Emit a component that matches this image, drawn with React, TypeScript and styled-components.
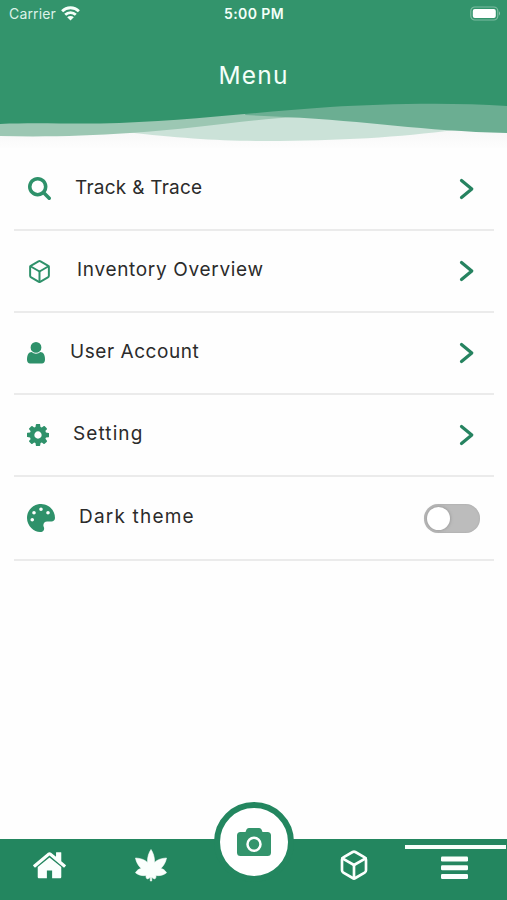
import React, { useState } from "react";
import styled, { createGlobalStyle } from "styled-components";
import { FaPalette } from "react-icons/fa";
import { FiBox } from "react-icons/fi";

const GlobalStyle = createGlobalStyle`
  *, *::before, *::after { box-sizing: border-box; }
  body { margin: 0; background: #fff; font-family: Inter, "Liberation Sans", sans-serif; }
  button { padding: 0; border: 0; background: none; color: inherit; font: inherit; }
`;

const Screen = styled.div`
  display: flex;
  flex-direction: column;
  width: 507px;
  height: 900px;
  overflow: hidden;
  background: #fefefe;
`;

const Header = styled.header`
  display: grid;
  grid-template-rows: 28px 74px 46px;
  height: 148px;
  flex: none;
  color: #f4fff9;
  background: linear-gradient(#33946c 103px, #fefefe 103px);
`;

const StatusBar = styled.div`
  display: grid;
  grid-template-columns: 1fr auto 1fr;
  align-items: center;
  padding: 0 6px 0 9px;
  font-size: 14px;
  line-height: 28px;
`;

const Carrier = styled.div`
  display: flex;
  align-items: center;
  gap: 5px;
  color: #dcf2e8;
  letter-spacing: 0.15px;

  svg {
    margin-top: -2px;
  }
`;

const Clock = styled.time`
  margin-left: -2px;
  font-weight: 600;
  font-size: 14px;
  letter-spacing: 0.4px;
`;

const BatteryIcon = styled.svg`
  justify-self: end;
  margin-top: -2px;
`;

const Title = styled.h1`
  margin: 0;
  padding-top: 32px;
  text-align: center;
  font-size: 24.5px;
  line-height: 30px;
  font-weight: 400;
  letter-spacing: 1.2px;
`;

const Wave = styled.svg`
  display: block;
  width: 507px;
  height: 46px;
`;

const List = styled.main`
  flex: 1;
  padding: 0 13px 0 14px;
`;

const Row = styled.div<{ $height: number }>`
  display: flex;
  align-items: center;
  height: ${(p) => p.$height}px;
  padding: 0 14px 0 13px;
  border-bottom: 2px solid #ebebeb;
`;

const RowIcon = styled.span<{ $width: number; $shift?: number }>`
  display: flex;
  width: ${(p) => p.$width}px;
  padding-left: ${(p) => p.$shift ?? 0}px;
  flex: none;
  color: #2e916a;
`;

const Label = styled.span<{ $tracking: number }>`
  flex: 1;
  padding-bottom: 2px;
  font-size: 19px;
  line-height: 24px;
  letter-spacing: ${(p) => p.$tracking}px;
  color: #2b2b2b;
  white-space: nowrap;
`;

const Chevron = styled.svg`
  margin-right: 5px;
  color: #268360;
`;

const Toggle = styled.button<{ $on: boolean }>`
  display: flex;
  justify-content: ${(p) => (p.$on ? "flex-end" : "flex-start")};
  align-items: center;
  width: 56px;
  height: 29px;
  padding: 0 3px;
  border-radius: 15px;
  background: ${(p) => (p.$on ? "#2e916a" : "#bcbcbc")};
  box-shadow: inset 0 0 2px #a5a5a5;
`;

const Knob = styled.span`
  width: 23px;
  height: 23px;
  border-radius: 50%;
  background: #fff;
  box-shadow: 0 0 3px 1px #a0a0a0;
`;

const TabBar = styled.nav`
  display: grid;
  grid-template-columns: repeat(5, 1fr);
  height: 61px;
  flex: none;
  color: #fbfffd;
  background: #23865f;
`;

const Tab = styled.button<{ $active?: boolean }>`
  display: flex;
  justify-content: center;
  align-items: flex-start;
  padding-top: ${(p) => (p.$active ? 7 : 10)}px;
  padding-right: 2px;
  border-top: ${(p) => (p.$active ? "4px solid #f8fffb" : "0")};
  margin: ${(p) => (p.$active ? "6px 1px 0 -1px" : "0")};
`;

const CameraTab = styled.button`
  display: flex;
  justify-content: center;
  align-items: center;
  justify-self: center;
  width: 80px;
  height: 80px;
  margin: -37px -1px 0 0;
  border: 6px solid #23865f;
  border-radius: 50%;
  background: #fff;
  color: #33946c;
`;

const SearchIcon = () => (
  <svg width="23" height="23" viewBox="64 128 1664 1664" fill="currentColor">
    <path d="M1216 832q0-185-131.5-316.5t-316.5-131.5-316.5 131.5-131.5 316.5 131.5 316.5 316.5 131.5 316.5-131.5 131.5-316.5zm512 832q0 52-38 90t-90 38q-54 0-90-38l-343-342q-179 124-399 124-143 0-273.5-55.5t-225-150-150-225-55.5-273.5 55.5-273.5 150-225 225-150 273.5-55.5 273.5 55.5 225 150 150 225 55.5 273.5q0 220-124 399l343 343q37 37 37 90z" />
  </svg>
);

const UserIcon = () => (
  <svg width="18" height="21.6" viewBox="256 128 1280 1536" fill="currentColor">
    <path d="M1536 1399q0 109-62.5 187t-150.5 78h-854q-88 0-150.5-78t-62.5-187q0-85 8.5-160.5t31.5-152 58.5-131 94-89 134.5-34.5q131 128 313 128t313-128q76 0 134.5 34.5t94 89 58.5 131 31.5 152 8.5 160.5zm-256-887q0 159-112.5 271.5t-271.5 112.5-271.5-112.5-112.5-271.5 112.5-271.5 271.5-112.5 271.5 112.5 112.5 271.5z" />
  </svg>
);

const CogIcon = () => (
  <svg width="22" height="22" viewBox="128 128 1536 1536" fill="currentColor">
    <path d="M1152 896q0-106-75-181t-181-75-181 75-75 181 75 181 181 75 181-75 75-181zm512-109v222q0 12-8 23t-20 13l-185 28q-19 54-39 91 35 50 107 138 10 12 10 25t-9 23q-27 37-99 108t-94 71q-12 0-26-9l-138-108q-44 23-91 38-16 136-29 186-7 28-36 28h-222q-14 0-24.5-8.5t-11.5-21.5l-28-184q-49-16-90-37l-141 107q-10 9-25 9-14 0-25-11-126-114-165-168-7-10-7-23 0-12 8-23 15-21 51-66.5t54-70.5q-27-50-41-99l-183-27q-13-2-21-12.5t-8-23.5v-222q0-12 8-23t19-13l186-28q14-46 39-92-40-57-107-138-10-12-10-24 0-10 9-23 26-36 98.5-107.5t94.5-71.5q13 0 26 10l138 107q44-23 91-38 16-136 29-186 7-28 36-28h222q14 0 24.5 8.5t11.5 21.5l28 184q49 16 90 37l142-107q9-9 24-9 13 0 25 10 129 119 165 170 7 8 7 22 0 12-8 23-15 21-51 66.5t-54 70.5q26 50 41 98l183 28q13 2 21 12.5t8 23.5z" />
  </svg>
);

const HomeIcon = () => (
  <svg width="33" height="33" viewBox="89 100 1614 1614" fill="currentColor">
    <path d="M1472 992v480q0 26-19 45t-45 19h-384v-384h-256v384h-384q-26 0-45-19t-19-45v-480q0-1 .5-3t.5-3l575-474 575 474q1 2 1 6zm223-69l-62 74q-8 9-21 11h-3q-13 0-21-7l-692-577-692 577q-12 8-24 7-13-2-21-11l-62-74q-8-10-7-23.5t11-21.5l719-599q32-26 76-26t76 26l244 204v-195q0-14 9-23t23-9h192q14 0 23 9t9 23v408l219 182q10 8 11 21.5t-7 23.5z" />
  </svg>
);

const LeafIcon = () => (
  <svg width="32" height="33" viewBox="0 0 32 33" fill="currentColor" stroke="currentColor" strokeWidth="0.6" strokeLinejoin="round">
    <path d="M16 .5C18 3.5 19.8 8 19.5 13.5C22.500 10.500 26.500 9.300 31.500 9C30.800 13 28.800 16.500 25.800 19.500C28.500 20 30.300 21.500 31.500 23.800C28.500 26.200 25 27 20.800 26.500C21.300 28 20.800 29 19.800 30C18.500 29.700 17.500 29 16.700 28.300V32H15.300V28.300C14.500 29 13.500 29.700 12.200 30C11.200 29 10.700 28 11.200 26.500C7 27 3.500 26.200.5 23.800C1.700 21.500 3.500 20 6.200 19.500C3.200 16.500 1.200 13 .5 9C5.500 9.300 9.500 10.500 12.500 13.500C12.200 8 14 3.500 16 .5Z" />
  </svg>
);

const CameraIcon = () => (
  <svg width="34" height="28" viewBox="0 0 34 28">
    <path d="M3.500 4H8.500L9.500 1.500Q10.100 0 11.800 0H22.200Q23.900 0 24.500 1.500L25.500 4H30.500Q34 4 34 7.500V24.500Q34 28 30.500 28H3.500Q0 28 0 24.500V7.500Q0 4 3.500 4Z" fill="currentColor" />
    <circle cx="17" cy="16.300" r="6.500" fill="none" stroke="#fff" strokeWidth="2.500" />
  </svg>
);

const WifiIcon = () => (
  <svg width="19" height="15" viewBox="0 0 19 15" fill="none" stroke="#f4fff9" strokeWidth="2.8">
    <path d="M1.1 5.2a12 12 0 0 1 16.8 0M4.2 8.8a7.600 7.600 0 0 1 10.600 0" />
    <path d="M9.500 14.600 6.200 11.300a4.700 4.700 0 0 1 6.600 0Z" fill="#f4fff9" stroke="none" />
  </svg>
);

const MenuIcon = () => (
  <svg width="27" height="24" viewBox="0 0 27 24" fill="currentColor">
    <rect y="0.5" width="27" height="5" rx="1.2" />
    <rect y="9.2" width="27" height="5" rx="1.2" />
    <rect y="18" width="27" height="5" rx="1.2" />
  </svg>
);

const items = [
  { label: "Track & Trace", icon: <SearchIcon />, offset: 48, shift: 1, tracking: 0.25, height: 83 },
  { label: "Inventory Overview", icon: <FiBox size={25} strokeWidth={1.9} />, offset: 50, shift: 0, tracking: 0.68, height: 82 },
  { label: "User Account", icon: <UserIcon />, offset: 43, shift: 0, tracking: 0.55, height: 82 },
  { label: "Setting", icon: <CogIcon />, offset: 46, shift: 0, tracking: 1.1, height: 82 },
];

export default function App() {
  const [dark, setDark] = useState(false);
  return (
    <>
      <GlobalStyle />
      <Screen>
        <Header>
          <StatusBar>
            <Carrier>
              <span>Carrier</span>
              <WifiIcon />
            </Carrier>
            <Clock>5:00 PM</Clock>
            <BatteryIcon width="31" height="15" viewBox="0 0 31 15">
              <rect x="0.8" y="1" width="27" height="13" rx="4" fill="none" stroke="#7dbca1" strokeWidth="1.2" />
              <rect x="2.8" y="3" width="23" height="9" rx="2" fill="#fff" />
              <path d="M29 5.3q2 2.2 0 4.4Z" fill="#8cc6ad" />
            </BatteryIcon>
          </StatusBar>
          <Title>Menu</Title>
          <Wave viewBox="0 102 507 46">
            <defs>
              <linearGradient id="shade" x1="0" y1="0" x2="0" y2="1">
                <stop offset="0.55" stopColor="#f6f6f6" />
                <stop offset="1" stopColor="#fefefe" />
              </linearGradient>
            </defs>
            <path d="M0 102H507V150H0Z" fill="url(#shade)" />
            <path d="M125 132C180 138 215 141 265 141C340 141 400 137 455 130L300 116L250 117Z" fill="#cbe2d8" />
            <path d="M0 102H300V117C250 119 195 129 130 133C85 136 45 137 0 136Z" fill="#9cc7b3" />
            <path d="M250 102H507V133C420 131 370 121 285 117L245 115Z" fill="#6bae92" />
            <path d="M0 102H507V106C450 102 380 104 330 107C245 113 175 122 100 123.5C65 124 35 122.5 0 124Z" fill="#33946c" />
          </Wave>
        </Header>
        <List>
          {items.map((item) => (
            <Row key={item.label} $height={item.height}>
              <RowIcon $width={item.offset} $shift={item.shift}>{item.icon}</RowIcon>
              <Label $tracking={item.tracking}>{item.label}</Label>
              <Chevron width="16" height="22" viewBox="0 0 16 22" fill="none" stroke="currentColor" strokeWidth="3.2" strokeLinecap="round" strokeLinejoin="round">
                <path d="M2.500 2.500 12.800 11 2.500 19.500" />
              </Chevron>
            </Row>
          ))}
          <Row $height={84}>
            <RowIcon $width={52}>
              <FaPalette size={28} />
            </RowIcon>
            <Label $tracking={1.2}>Dark theme</Label>
            <Toggle $on={dark} role="switch" aria-checked={dark} aria-label="Dark theme" onClick={() => setDark(!dark)}>
              <Knob />
            </Toggle>
          </Row>
        </List>
        <TabBar>
          <Tab aria-label="Home"><HomeIcon /></Tab>
          <Tab aria-label="Plants"><LeafIcon /></Tab>
          <CameraTab aria-label="Camera"><CameraIcon /></CameraTab>
          <Tab aria-label="Inventory"><FiBox size={32} /></Tab>
          <Tab $active aria-label="Menu"><MenuIcon /></Tab>
        </TabBar>
      </Screen>
    </>
  );
}
